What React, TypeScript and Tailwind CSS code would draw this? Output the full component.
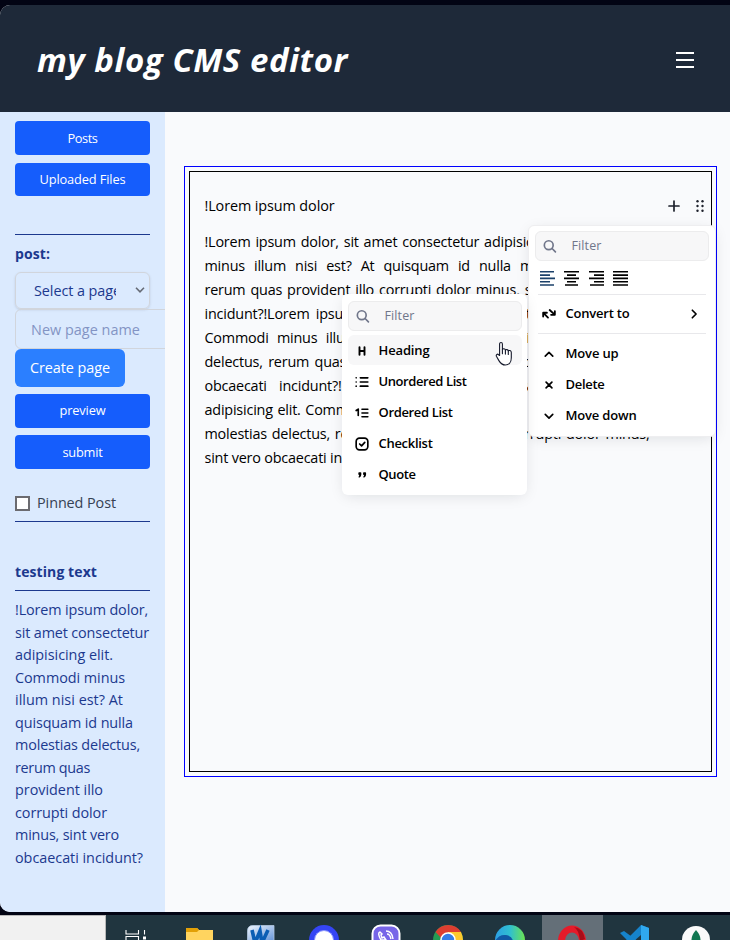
import { useLayoutEffect, useRef, useState, type ReactNode } from 'react';

/* Text run whose letter spacing is tuned so that it spans `w` pixels. */
function Fit({ w, children, className = '' }: { w: number; children: string; className?: string }) {
  const ref = useRef<HTMLSpanElement>(null);
  const [ls, setLs] = useState(0);
  useLayoutEffect(() => {
    const el = ref.current;
    if (!el) return;
    setLs((w - el.getBoundingClientRect().width) / children.length);
  }, [w, children]);
  return (
    <span ref={ref} className={`inline-block whitespace-pre ${className}`} style={{ letterSpacing: `${ls}px` }}>
      {children}
    </span>
  );
}

const paragraph = [
  '!Lorem ipsum dolor, sit amet consectetur adipisicing elit. Commodi',
  'minus illum nisi est? At quisquam id nulla molestias delectus,',
  'rerum quas provident illo corrupti dolor minus, sint vero obcaecati',
  'incidunt?!Lorem ipsum dolor, sit amet consectetur adipisicing elit.',
  'Commodi minus illum nisi est? At quisquam id nulla molestias',
  'delectus, rerum quas provident illo corrupti dolor minus, sint vero',
  'obcaecati incidunt?!Lorem ipsum dolor, sit amet consectetur',
  'adipisicing elit. Commodi minus illum nisi est? At quisquam id nulla',
  'molestias delectus, rerum quas provident illo corrupti dolor minus,',
];

const excerpt: [string, number][] = [
  ['!Lorem ipsum dolor,', 133],
  ['sit amet consectetur', 134],
  ['adipisicing elit.', 98],
  ['Commodi minus', 110],
  ['illum nisi est? At', 108],
  ['quisquam id nulla', 118],
  ['molestias delectus,', 125],
  ['rerum quas', 75],
  ['provident illo', 88],
  ['corrupti dolor', 92],
  ['minus, sint vero', 104],
  ['obcaecati incidunt?', 128],
];

function Icon({ children, className = 'size-5' }: { children: ReactNode; className?: string }) {
  return (
    <svg viewBox="0 0 24 24" fill="none" stroke="currentColor" strokeWidth="2" strokeLinecap="round" strokeLinejoin="round" className={`shrink-0 ${className}`}>
      {children}
    </svg>
  );
}

function Filter() {
  return (
    <div className="flex h-[30px] items-center rounded-md border border-[#ececed] bg-[#f7f7f8] pl-[4px] text-[#70768a]">
      <Icon>
        <circle cx="10.5" cy="11" r="5.3" />
        <path d="m18.5 19-4-4" />
      </Icon>
      <Fit w={30} className="ml-[11.5px] text-[12.5px] font-medium">Filter</Fit>
    </div>
  );
}

function Item({ label, w, icon, active, arrow }: { label: string; w: number; icon: ReactNode; active?: boolean; arrow?: boolean }) {
  return (
    <div className={`flex h-[30px] items-center rounded-md pt-px pl-1 text-black ${active ? 'bg-[#f7f7f8]' : ''}`}>
      <Icon>{icon}</Icon>
      <Fit w={w} className="mt-px ml-[6.5px] text-[13px] font-semibold">{label}</Fit>
      {arrow && (
        <Icon className="mr-[5px] ml-auto size-5">
          <path d="m10 7.5 4.5 4.5-4.5 4.5" />
        </Icon>
      )}
    </div>
  );
}

function Align({ lines, blue }: { lines: string; blue?: boolean }) {
  return (
    <svg viewBox="0 0 15 15" className={`size-[15px] ${blue ? 'text-[#1b4069]' : 'text-black'}`} stroke="currentColor" strokeWidth="1.6">
      <path d={lines} />
    </svg>
  );
}

function SideButton({ label, w, className }: { label: string; w: number; className: string }) {
  return (
    <button className={`flex w-full items-center justify-center rounded-[4px] bg-[#155dfc] text-[12.8px] text-white ${className}`}>
      <Fit w={w}>{label}</Fit>
    </button>
  );
}

function Sidebar() {
  return (
    <aside className="w-[165px] shrink-0 overflow-hidden bg-[#dbeafe] px-[15px] pt-[9px] text-[14.4px] text-[#1c398e]">
      <SideButton label="Posts" w={30} className="h-[34px] pt-0.5" />
      <SideButton label="Uploaded Files" w={86} className="mt-2 h-[33px]" />
      <hr className="mt-[38px] border-[#1c398e]" />
      <div className="mt-[6px] flex h-6 items-center text-[14px] font-bold">
        <Fit w={35}>post:</Fit>
      </div>
      <div className="mt-[7px] flex h-[37px] items-center rounded-md border border-[#d1d5dc] pt-px pl-[18px] shadow-sm">
        <div className="w-[82px] overflow-hidden">
          <Fit w={87}>Select a page</Fit>
        </div>
        <svg viewBox="0 0 10 6" className="mr-1 mb-0.5 ml-auto h-1.5 w-2.5" fill="none" stroke="#666b75" strokeWidth="1.6">
          <path d="m1 .8 4 4 4-4" />
        </svg>
      </div>
      <div className="flex h-10 w-[215px] items-center rounded-md border border-[#d1d5dc] pt-px pl-[15px] text-[#8394c4]">
        <Fit w={109}>New page name</Fit>
      </div>
      <button className="flex h-[38px] w-[110px] items-center justify-center rounded-md bg-[#2b7fff] text-white">
        <Fit w={80}>Create page</Fit>
      </button>
      <SideButton label="preview" w={46} className="mt-[7px] h-[34px]" />
      <SideButton label="submit" w={40} className="mt-[7px] h-[34px] pt-0.5" />
      <label className="mt-[22px] flex h-6 items-center text-[#364153]">
        <span className="size-[15px] border-2 border-[#6b6b70] bg-white" />
        <Fit w={79} className="ml-[7px]">Pinned Post</Fit>
      </label>
      <hr className="mt-[6px] border-[#1c398e]" />
      <h2 className="mt-[37px] flex h-6 items-center text-[14px] font-bold">
        <Fit w={82}>testing text</Fit>
      </h2>
      <hr className="mt-[7px] border-[#1c398e]" />
      <div className="mt-[8px] leading-[22.5px]">
        {excerpt.map(([line, w]) => (
          <div key={line} className="h-[22.5px]">
            <Fit w={w}>{line}</Fit>
          </div>
        ))}
      </div>
    </aside>
  );
}

function BlockMenu() {
  return (
    <div className="absolute top-[225px] left-[528px] h-[212px] w-[188px] rounded-md border border-[#eeeef0] bg-white px-[6px] py-[5px] shadow-[0_3px_15px_-3px_rgba(13,20,33,0.13)]">
      <Filter />
      <div className="mt-[10px] flex gap-[9.4px] pl-[5px]">
        <Align blue lines="M0 .8h14M0 4.1h10M0 7.4h15M0 10.7h10M0 14h14" />
        <Align lines="M0 .8h15M3 4.1h9M0 7.4h15M3 10.7h9M1 14h13" />
        <Align lines="M0 .8h15M5 4.1h10M0 7.4h15M5 10.7h10M1 14h14" />
        <Align lines="M0 .8h15M0 4.1h15M0 7.4h15M0 10.7h15M0 14h15" />
      </div>
      <hr className="mx-[3px] mt-2 border-[#e8e8eb]" />
      <div className="pt-[3px]">
        <Item label="Convert to" w={64} arrow icon={<path strokeWidth="2.2" d="M5 15v-4.500h4.500M5.500 11l5.300 5.300M19 8.500V13h-4.500M12.800 7.200l5.700 5.300" />} />
      </div>
      <hr className="mx-[3px] mt-[5px] border-[#e8e8eb]" />
      <div className="flex flex-col gap-px pt-1">
        <Item label="Move up" w={53} icon={<path d="m7.500 14.500 4.500-4.500 4.500 4.500" />} />
        <Item label="Delete" w={39} icon={<path d="m8.500 8.500 7 7m0-7-7 7" />} />
        <Item label="Move down" w={71} icon={<path d="m7.500 10 4.500 4.500 4.500-4.500" />} />
      </div>
    </div>
  );
}

function ConvertMenu() {
  return (
    <div className="absolute top-[294px] left-[342px] h-[201px] w-[185px] rounded-md bg-white p-[6px] pt-[7px] pr-[5px] shadow-[0_3px_15px_-3px_rgba(13,20,33,0.13)]">
      <Filter />
      <div className="mt-1 flex flex-col gap-px">
        <Item active label="Heading" w={51} icon={<path strokeWidth="2.3" d="M9 7.500v9m6-9v9m-6-4.500h6" />} />
        <Item label="Unordered List" w={88} icon={<path d="M10 7h9m-9 5h9m-9 5h9M5 7h.01M5 12h.01M5 17h.01" />} />
        <Item label="Ordered List" w={74} icon={<path d="M12 7.500h7m-7 4.500h7m-7 4.500h7M5 9l2.500-1.700V15" />} />
        <Item label="Checklist" w={54} icon={<><rect x="5" y="5" width="14" height="14" rx="4" /><path d="m9.200 12 2.300 2.300 3.800-4.300" /></>} />
        <Item label="Quote" w={37} icon={<path strokeWidth="1.8" fill="currentColor" d="M8.500 9.500h1.800v2c0 1.500-.6 2.200-1.600 2.700m-.2-4.700v1.500h1.800M14.200 9.500H16v2c0 1.500-.6 2.200-1.600 2.700m-.2-4.700v1.500H16" />} />
      </div>
    </div>
  );
}

function Pointer() {
  return (
    <svg viewBox="0 0 20 26" className="absolute top-[341px] left-[493.5px] h-[26px] w-5" fill="white" stroke="#15192b" strokeWidth="1.1" strokeLinejoin="round" strokeLinecap="round">
      <path d="M5.600 14.500V3.100C5.600 1 8.400 1 8.400 3.100v5.600c.3-1.300 2.800-1.200 3 .5.5-1 2.700-.8 2.900.7.7-.9 3-.4 3 1.600v5.200c0 4.500-2.500 7.300-6 7.300-3.300 0-4.700-1.500-6.400-4.400l-2.500-4.300c-.6-1.700 1.100-2.800 2.200-1.500Z" />
      <path d="M8.400 8.700v4.100m3-3.600v3.900m2.900-3.200v3.500" />
    </svg>
  );
}

function Taskbar() {
  return (
    <footer className="mt-[3px] flex h-[25px] overflow-hidden bg-[#20353f]">
      <div className="w-[106px] shrink-0 border-t border-r border-[#b9b9b9] bg-[#f1f1f1]" />
      <svg viewBox="106 915 624 25" className="h-[25px] w-[624px] shrink-0">
        <path d="M126 930v4h12.500v-4M126 940v-3.500h12.500v3.500M144.500 930v4.500" fill="none" stroke="white" strokeWidth="1.1" />
        <path d="M143 936.500h3v3h-3z" fill="white" />
        <path d="M186 929q0-1 1-1h10l2 2h14v12h-27z" fill="#ffd45f" />
        <path d="M186 929q0-1 1-1h10l2 2-2 2h-11z" fill="#e2a006" />
        <linearGradient id="word" x1="0" x2="1" y1="0" y2="1"><stop stopColor="#f1f7ff" /><stop offset="1" stopColor="#6796d8" /></linearGradient>
        <path d="M247.500 931q0-5.500 5.500-5.500h21v15h-26.500z" fill="url(#word)" stroke="#b3c8df" strokeWidth=".8" />
        <path d="m252 930 3 13 5-12 2 12 6-13" fill="none" stroke="#0c5eb4" strokeWidth="3.600" />
        <circle cx="324" cy="940" r="15" fill="#3545f5" />
        <circle cx="324" cy="940" r="9.500" fill="white" stroke="#8b95ff" />
        <rect x="372.500" y="925.500" width="27" height="28" rx="8" fill="#7765e8" stroke="white" strokeWidth="2" />
        <path d="M380 932q-3 1 1 8h5l-2-3-2 1-1-3 1-1zM386 931q6 0 7 8M387 934q3 0 4 5" fill="none" stroke="white" strokeWidth="1.500" />
        <circle cx="448" cy="940" r="15" fill="#259b52" />
        <path d="M435.500 932a15 15 0 0 1 25.500 0h-13l-5 8z" fill="#dd3e31" />
        <path d="M448 932h13q2 4 2 8h-15z" fill="#fdc92e" />
        <circle cx="448" cy="940" r="7" fill="#357de8" stroke="white" strokeWidth="1.600" />
        <linearGradient id="edge"><stop stopColor="#2b9ee5" /><stop offset=".5" stopColor="#30bfd0" /><stop offset="1" stopColor="#6be451" /></linearGradient>
        <circle cx="510" cy="940" r="15" fill="url(#edge)" />
        <path d="M495 941q4-7 11-6 6 1 7 6z" fill="#1158a5" />
        <path d="M542 915h61v25h-61z" fill="#646f78" />
        <ellipse cx="572" cy="941" rx="10.500" ry="12" fill="none" stroke="#e51b2a" strokeWidth="7" />
        <path d="M574 927q9 1 11 12l-5 2q-1-11-6-14z" fill="#a70d19" />
        <path d="m620 933 4-2 15 11h-10zM641 925l8 3v14h-8v-7l-7 6h-9z" fill="#1683cb" />
        <path d="m641 925 8 3v13h-8z" fill="#30a9ef" />
        <circle cx="696" cy="940" r="14" fill="#fafafa" />
        <path d="M696 930q-6 7-4 12h8q2-5-4-12z" fill="#117751" />
      </svg>
    </footer>
  );
}

export default function App() {
  return (
    <div className="relative h-[940px] w-[730px] overflow-hidden bg-[#020414] pt-[5px] font-['Open_Sans','Noto_Sans',sans-serif]">
      <div className="flex h-[907px] flex-col overflow-hidden rounded-l-[10px] bg-[#f9fafb]">
        <header className="flex h-[107px] shrink-0 items-center justify-between bg-[#1e2939] pr-9 pl-[37px] text-white">
          <h1 className="pt-[3px] text-[33px] font-bold italic">
            <Fit w={311}>my blog CMS editor</Fit>
          </h1>
          <svg viewBox="0 0 18 18" className="mt-0.5 size-[18px]" stroke="white" strokeWidth="2">
            <path d="M0 2h18M0 9h18M0 16h18" />
          </svg>
        </header>
        <div className="flex min-h-0 flex-1">
          <Sidebar />
          <main className="flex-1 bg-[#f9fafc] pt-[54px] pr-[13px] pl-[19px]">
            <div className="h-[611px] border border-[#0000ff] p-1">
              <div className="h-full border border-black pt-[22px] pl-[14.5px] text-[14.4px] leading-6 text-black">
                <div className="flex items-center justify-between pr-[6px]">
                  <Fit w={130}>!Lorem ipsum dolor</Fit>
                  <div className="flex items-center gap-[15px]">
                    <svg viewBox="0 0 12 12" className="size-3" stroke="#1d202b" strokeWidth="1.7" strokeLinecap="round"><path d="M1 6h10M6 1v10" /></svg>
                    <svg viewBox="0 0 10 12" className="h-3 w-2.5" fill="#1d202b">
                      {[1.3, 6, 10.7].map((y) => (
                        <g key={y}><circle cx="2.500" cy={y} r="1.200" /><circle cx="7.500" cy={y} r="1.200" /></g>
                      ))}
                    </svg>
                  </div>
                </div>
                <div className="mt-3 w-[445px] tracking-[-0.2px]">
                  {paragraph.map((line) => (
                    <div key={line} className="h-6 text-justify whitespace-nowrap [text-align-last:justify]">{line}</div>
                  ))}
                  <div className="h-6">sint vero obcaecati incidunt?</div>
                </div>
              </div>
            </div>
          </main>
        </div>
      </div>
      <Taskbar />
      <BlockMenu />
      <ConvertMenu />
      <Pointer />
    </div>
  );
}
